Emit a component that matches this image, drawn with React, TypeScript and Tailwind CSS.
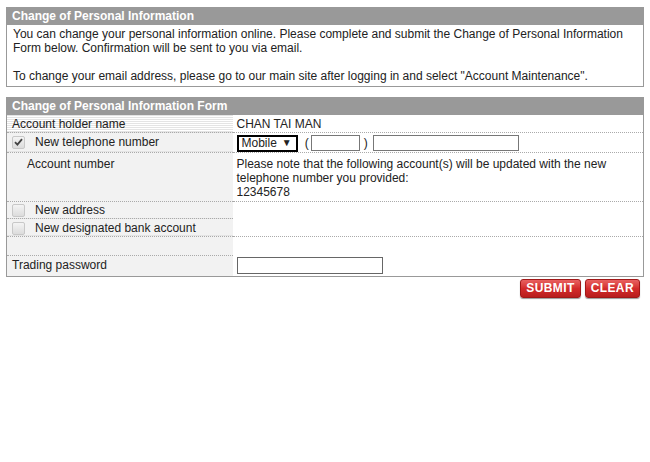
const stripes =
  "bg-[repeating-linear-gradient(to_bottom,#e4e4e4_0px,#e4e4e4_1px,#ffffff_1px,#ffffff_2px)]";

function CheckBox({ checked }: { checked?: boolean }) {
  return (
    <span className="inline-flex items-center justify-center w-[13px] h-[13px] rounded-[2px] border border-[#c8c8c8] bg-gradient-to-b from-[#f4f4f4] to-[#dcdcdc] mr-[10px] align-middle">
      {checked && (
        <svg width="9" height="8" viewBox="0 0 9 8">
          <path d="M1 4.2 L3.4 6.6 L8 1.2" fill="none" stroke="#444" strokeWidth="1.8" />
        </svg>
      )}
    </span>
  );
}

function RedButton({ label }: { label: string }) {
  return (
    <button className="h-[19px] px-[5px] rounded-[3px] bg-gradient-to-b from-[#e86060] via-[#d42b2b] to-[#b81d1d] border border-[#a01818] text-white font-bold text-[12px] leading-none tracking-[0.4px] shadow-[0_1px_1px_rgba(0,0,0,0.4)]">
      {label}
    </button>
  );
}

export default function App() {
  const cellL = `${stripes} border-b border-dotted border-[#aaa] px-[5px] align-top`;
  const cellR = "border-b border-dotted border-[#aaa] px-[4px] align-top";
  return (
    <div className="w-[650px] h-[462px] bg-white pt-[7px] px-[6px] font-['Liberation_Sans',Arial,sans-serif] text-[12px] text-[#222] leading-[14px]">
      <div className="w-[638px]">
        <div className="bg-[#999] text-white font-bold h-[18px] leading-[18px] px-[6px]">
          Change of Personal Information
        </div>
        <div className="border border-t-0 border-[#999] px-[6px] pt-[2px] pb-[3px]">
          <p>
            You can change your personal information online. Please complete and submit the Change of Personal Information
            Form below. Confirmation will be sent to you via email.
          </p>
          <p className="mt-[14px]">
            To change your email address, please go to our main site after logging in and select "Account Maintenance".
          </p>
        </div>

        <div className="mt-[10px] bg-[#999] text-white font-bold h-[18px] leading-[18px] px-[6px]">
          Change of Personal Information Form
        </div>
        <table className="w-full border-collapse border-x border-b border-[#999] table-fixed">
          <colgroup>
            <col className="w-[226px]" />
            <col />
          </colgroup>
          <tbody>
            <tr className="h-[17px]">
              <td className={`${cellL} pt-[2px]`}>Account holder name</td>
              <td className={`${cellR} pt-[2px]`}>CHAN TAI MAN</td>
            </tr>
            <tr className="h-[18px]">
              <td className={`${cellL} pt-[2px]`}>
                <CheckBox checked />
                New telephone number
              </td>
              <td className={`${cellR} pt-[2px] pb-0`}>
                <div className="flex items-center">
                  <span className="inline-flex items-center h-[17px] border-2 border-black pl-[3px] pr-[4px] text-[12px] mr-[7px]">
                    Mobile <span className="text-[10px] ml-[5px]">▼</span>
                  </span>
                  <span>(</span>
                  <input className="w-[49px] h-[16px] border border-[#777] ml-[2px] mr-[4px]" />
                  <span>)</span>
                  <input className="w-[146px] h-[16px] border border-[#777] ml-[5px]" />
                </div>
              </td>
            </tr>
            <tr className="h-[49px]">
              <td className={`${cellL} pl-[20px] pt-[4px]`}>Account number</td>
              <td className={`${cellR} pt-[4px] pb-[2px]`}>
                Please note that the following account(s) will be updated with the new
                <br />
                telephone number you provided:
                <br />
                12345678
              </td>
            </tr>
            <tr className="h-[17px]">
              <td className={`${cellL} pt-[1px]`}>
                <CheckBox />
                New address
              </td>
              <td rowSpan={2} className={cellR}></td>
            </tr>
            <tr className="h-[18px]">
              <td className={`${cellL} pt-[2px]`}>
                <CheckBox />
                New designated bank account
              </td>
            </tr>
            <tr className="h-[19px]">
              <td className={cellL}></td>
              <td></td>
            </tr>
            <tr className="h-[21px]">
              <td className={`${stripes} px-[5px] pt-[2px] align-top`}>Trading password</td>
              <td className="px-[4px] pt-[2px] align-top">
                <input type="password" className="block w-[146px] h-[17px] border border-[#666]" />
              </td>
            </tr>
          </tbody>
        </table>
        <div className="flex justify-end gap-[4px] mt-[2px] pr-[4px]">
          <RedButton label="SUBMIT" />
          <RedButton label="CLEAR" />
        </div>
      </div>
    </div>
  );
}
